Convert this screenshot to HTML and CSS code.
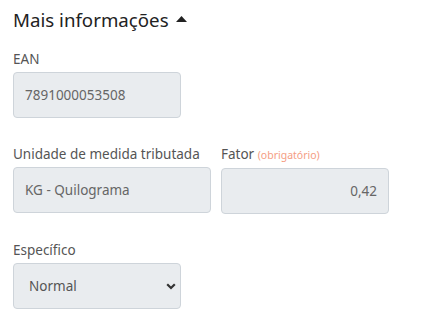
FILE: index.html
```html
<!DOCTYPE html>
<html lang="pt-BR">
<head>
<meta charset="utf-8">
<link rel="stylesheet" href="styles.css">
</head>
<body>
<div class="panel">
  <h2 class="title">Mais informações <svg class="caret" width="11" height="6" viewBox="0 0 11 6"><path d="M0 6 L5.5 0 L11 6 Z" fill="#222"/></svg></h2>
  <div class="group">
    <label class="label">EAN</label>
    <input class="field w168" type="text" value="7891000053508" disabled>
  </div>
  <div class="row">
    <div class="group">
      <label class="label">Unidade de medida tributada</label>
      <input class="field w198" type="text" value="KG - Quilograma" disabled>
    </div>
    <div class="group">
      <label class="label">Fator <span class="req">(obrigatório)</span></label>
      <input class="field w168 right" type="text" value="0,42" disabled>
    </div>
  </div>
  <div class="group">
    <label class="label">Específico</label>
    <div class="select-wrap w168">
      <select class="field select">
        <option>Normal</option>
      </select>
      <svg class="chev" width="10" height="7" viewBox="0 0 10 7"><path d="M1.2 1.2 L5 5 L8.8 1.2" fill="none" stroke="#333" stroke-width="2.2"/></svg>
    </div>
  </div>
</div>
</body>
</html>
```

FILE: styles.css
```css
* { box-sizing: border-box; }
body {
  margin: 0;
  background: #fff;
  font-family: "Noto Sans", "Open Sans", sans-serif;
}
.panel {
  padding: 9px 0 0 13px;
}
.title {
  margin: 0 0 18px 0;
  font-size: 18.7px;
  font-weight: 400;
  line-height: 22px;
  color: #222;
  display: flex;
  align-items: center;
  gap: 7px;
}
.caret { margin-top: -2px; }
.group {
  display: flex;
  flex-direction: column;
  margin-bottom: 26px;
}
.row {
  display: flex;
  gap: 10px;
}
.label {
  font-size: 13.5px;
  line-height: 21px;
  color: #555;
  margin-bottom: 2px;
}
.req {
  font-size: 10.5px;
  color: #f59d83;
}
.field {
  height: 46px;
  border: 1px solid #ced4da;
  border-radius: 4px;
  background: #e9ecef;
  font-family: "Noto Sans", "Open Sans", sans-serif;
  font-size: 13.5px;
  color: #666;
  padding: 0 11px;
  margin: 0;
}
.field:disabled { color: #666; opacity: 1; -webkit-text-fill-color: #666; }
.w168 { width: 168px; }
.w198 { width: 198px; }
.right { text-align: right; }
.select-wrap {
  position: relative;
  height: 46px;
}
.select {
  width: 100%;
  -webkit-appearance: none;
  appearance: none;
  padding-left: 15px;
  color: #555;
}
.chev {
  position: absolute;
  right: 5px;
  top: 20px;
}
```
